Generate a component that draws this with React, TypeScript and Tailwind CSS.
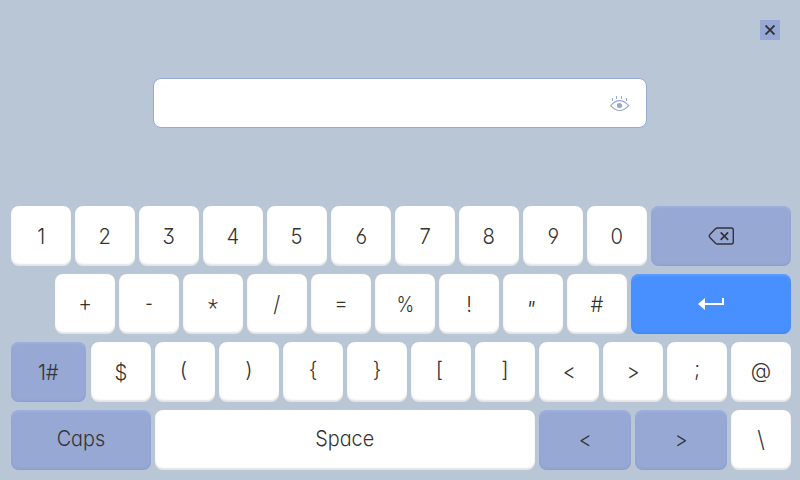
import type { ReactNode } from "react";

type Tone = "light" | "muted" | "primary";

const tones: Record<Tone, string> = {
  light: "bg-white shadow-[inset_0_-2px_1.5px_rgba(0,0,0,0.11)]",
  muted:
    "bg-[#97a8d5] shadow-[inset_0_2px_2px_rgba(160,178,224,0.8),inset_0_-1px_2px_rgba(125,145,200,0.5)]",
  primary:
    "bg-[#488fff] shadow-[inset_0_2px_2px_rgba(100,162,255,0.7),inset_0_-1px_2px_rgba(50,120,230,0.5)]",
};

// Per-glyph optical adjustments; everything else is only condensed.
const optics: Record<string, string> = {
  "+": "pb-[3px] scale-x-95",
  "-": "pb-[3px] scale-x-75",
  "*": "pt-[9px] font-['Roboto'] text-[23px]",
  "=": "pb-[3px] scale-x-95",
  "%": "scale-x-[.86]",
  '"': "pt-2.5 pr-[5px] italic",
  "(": "pb-1 pr-[3px] text-[21px]",
  ")": "pb-1 text-[21px]",
  "{": "pb-1 text-[21px]",
  "}": "pb-1 text-[21px]",
  "[": "pb-1 pr-[3px] text-[21px]",
  "]": "pb-1 text-[21px]",
  "<": "pb-0.5 scale-x-90",
  ">": "pb-0.5 scale-x-90",
  ";": "pb-2 scale-x-90",
  "@": "pb-[3px] text-[21px]",
  "\\": "text-[23px] scale-x-95",
  Caps: "pb-1 scale-x-90",
  Space: "pb-1 scale-x-90",
};

function Key({
  label,
  children,
  tone = "light",
  width = "w-[60px]",
}: {
  label?: string;
  children?: ReactNode;
  tone?: Tone;
  width?: string;
}) {
  return (
    <button
      className={`flex h-[60px] shrink-0 items-center justify-center rounded-lg ${width} ${tones[tone]}`}
    >
      {label ? (
        <span className={`block whitespace-pre ${optics[label] ?? "scale-x-[.92]"}`}>{label}</span>
      ) : (
        children
      )}
    </button>
  );
}

function BackspaceIcon() {
  return (
    <svg width="26" height="18" viewBox="0 0 26 18" fill="none" stroke="#333" className="block">
      <path d="M9.5 1H23.3a2 2 0 0 1 2 2v12a2 2 0 0 1-2 2H9.5Q8.3 17 7.5 16.2L1.9 10.4Q.7 9 1.9 7.6L7.5 1.8Q8.3 1 9.5 1Z" strokeWidth="1.4" strokeLinejoin="round" />
      <path d="M12.7 5.4 20.1 12.8M20.1 5.4 12.7 12.8" strokeWidth="1.7" />
    </svg>
  );
}

function EnterIcon() {
  return (
    <svg width="26" height="12" viewBox="0 0 26 12" fill="#fff" className="block">
      <path d="M0 6 7 0V5H24V0H26V7H7V12Z" />
    </svg>
  );
}

function EyeIcon() {
  return (
    <svg width="20" height="16" viewBox="0 0 20 16" fill="none" stroke="#97a8d5" className="mt-0.5 block">
      <path d="M.8 9.6Q4.7 4.6 9.6 4.6T18.6 9.6Q14.5 14.5 9.6 14.5T.8 9.6Z" strokeWidth="1.1" />
      <circle cx="9.5" cy="9.5" r="2.6" fill="#97a8d5" stroke="none" />
      <path d="M2.5 2V5M6.5 0V3M11.5 0V3M16.5 2V5" />
    </svg>
  );
}

export default function App() {
  return (
    <div className="flex h-[480px] w-[800px] flex-col overflow-hidden bg-[#b8c6d6] font-['Inter','Noto_Sans',sans-serif] text-[22px] leading-[28px] font-light text-[#333] [font-feature-settings:'cv11','cv03','cv04','cv09','calt'_0]">
      <header className="flex h-[78px] justify-end pt-5 pr-5">
        <button className="flex size-5 items-center justify-center bg-[#97a8d5]">
          <svg width="10" height="10" viewBox="0 0 10 10" stroke="#333" strokeWidth="1.9" className="block">
            <path d="M.5.5 9.5 9.5M9.5.5.5 9.5" />
          </svg>
        </button>
      </header>

      <div className="mx-auto flex h-[50px] w-[494px] items-center justify-end rounded-lg border border-[#97a8d5] bg-white pr-4">
        <EyeIcon />
      </div>

      <main className="mt-[78px] ml-[11px] flex w-[780px] flex-col gap-2">
        <div className="flex gap-1">
          {["1", "2", "3", "4", "5", "6", "7", "8", "9", "0"].map((k) => (
            <Key key={k} label={k} />
          ))}
          <Key tone="muted" width="w-[140px]">
            <BackspaceIcon />
          </Key>
        </div>

        <div className="flex gap-1 pl-11">
          {["+", "-", "*", "/", "=", "%", "!", '"', "#"].map((k) => (
            <Key key={k} label={k} />
          ))}
          <Key tone="primary" width="w-[160px]">
            <EnterIcon />
          </Key>
        </div>

        <div className="flex gap-1">
          <Key tone="muted" width="w-[75px]" label="1#" />
          <div className="ml-px flex gap-1">
            {["$", "(", ")", "{", "}", "[", "]", "<", ">", ";", "@"].map((k) => (
              <Key key={k} label={k} />
            ))}
          </div>
        </div>

        <div className="flex gap-1">
          <Key tone="muted" width="w-[140px]" label="Caps" />
          <Key width="w-[380px]" label="Space" />
          <Key tone="muted" width="w-[92px]" label="<" />
          <Key tone="muted" width="w-[92px]" label=">" />
          <Key label="\" />
        </div>
      </main>
    </div>
  );
}
